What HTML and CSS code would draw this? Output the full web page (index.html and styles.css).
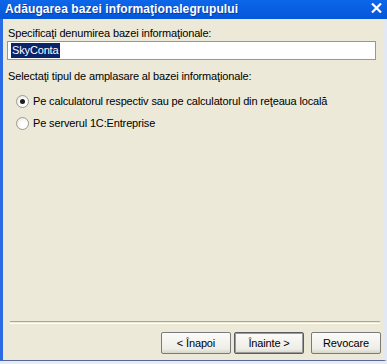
FILE: index.html
```html
<!DOCTYPE html>
<html>
<head>
<meta charset="utf-8">
<link rel="stylesheet" href="styles.css">
</head>
<body>
<div class="window">
  <div class="titlebar">
    <span class="title">Adăugarea bazei informaţionalegrupului</span>
    <svg class="close" width="11" height="10" viewBox="0 0 11 10"><path d="M1 0.5 L10 9.5 M10 0.5 L1 9.5" stroke="#fff" stroke-width="2.2" fill="none"/></svg>
  </div>
  <div class="frame">
    <div class="content">
      <div class="label first">Specificaţi denumirea bazei informaţionale:</div>
      <div class="input"><span class="sel">SkyConta</span></div>
      <div class="label second">Selectaţi tipul de amplasare al bazei informaţionale:</div>
      <div class="radio r1"><span class="circle checked"></span><span>Pe calculatorul respectiv sau pe calculatorul din reţeaua locală</span></div>
      <div class="radio r2"><span class="circle"></span><span>Pe serverul 1C:Entreprise</span></div>
    </div>
    <div class="footer">
      <div class="sep"></div>
      <div class="buttons">
        <div class="btn">&lt; Înapoi</div>
        <div class="btn default">Înainte &gt;</div>
        <div class="btn cancel">Revocare</div>
      </div>
    </div>
  </div>
</div>
</body>
</html>
```

FILE: styles.css
```css
html, body {
  margin: 0;
  padding: 0;
}
body {
  width: 387px;
  height: 364px;
  background: #E6ECF6;
  font-family: "Liberation Sans", Arial, sans-serif;
  font-size: 11px;
  letter-spacing: -0.15px;
  overflow: hidden;
}
.window {
  width: 387px;
  height: 361px;
  display: flex;
  flex-direction: column;
  box-sizing: border-box;
}
.titlebar {
  height: 19px;
  flex: none;
  background: linear-gradient(#0C67EA, #0A5FE2 40%, #0557DA);
  display: flex;
  align-items: center;
  padding: 0 5px 0 5px;
  box-sizing: border-box;
}
.title {
  color: #fff;
  font-weight: bold;
  font-size: 12px;
  letter-spacing: 0.1px;
  text-shadow: 1px 1px 0 #0A3CA0;
  flex: 1;
  line-height: 19px;
}
.close {
  margin-top: -3px;
}
.frame {
  flex: 1;
  display: flex;
  flex-direction: column;
  background: #ECE9D8;
  border-left: 3px solid #2B6CE4;
  border-right: 3px solid #E2E8F4;
  border-bottom: 1px solid #566894;
  padding: 0 3px 0 4px;
}
.content {
  flex: 1;
  display: flex;
  flex-direction: column;
  align-items: flex-start;
  padding-top: 8px;
}
.label {
  line-height: 13px;
  color: #000;
  margin-left: 1px;
}
.label.second {
  margin-top: 10px;
}
.input {
  margin-top: 1px;
  width: 369px;
  height: 19px;
  box-sizing: border-box;
  border: 1px solid #7F9DB9;
  background: #fff;
  display: flex;
  align-items: center;
  padding-left: 3px;
}
.sel {
  background: #0A246A;
  color: #fff;
  line-height: 15px;
  padding: 0 1px;
}
.radio {
  display: flex;
  align-items: center;
  height: 13px;
  line-height: 13px;
  margin-left: 9px;
  gap: 4px;
}
.radio.r1 { margin-top: 12px; }
.radio.r2 { margin-top: 9px; }
.circle {
  width: 13px;
  height: 13px;
  box-sizing: border-box;
  border-radius: 50%;
  border: 1px solid #9C9A92;
  background: radial-gradient(circle at 65% 65%, #fff 30%, #E4E2DA 100%);
  display: flex;
  align-items: center;
  justify-content: center;
}
.circle.checked::after {
  content: "";
  width: 5px;
  height: 5px;
  border-radius: 50%;
  background: #1E1E1E;
}
.footer {
  flex: none;
  padding-bottom: 6px;
}
.sep {
  margin: 0 1px 0 3px;
  height: 1px;
  border-top: 1px solid #ACA899;
  border-bottom: 1px solid #fff;
}
.buttons {
  margin-top: 8px;
  display: flex;
  justify-content: flex-end;
  gap: 3px;
}
.btn {
  width: 70px;
  height: 22px;
  box-sizing: border-box;
  border: 1px solid #7A7A7A;
  border-radius: 2px;
  background: linear-gradient(#FBFBF9, #EEEDE6 80%, #D8D5C9);
  display: flex;
  align-items: center;
  justify-content: center;
  color: #000;
}
.btn.default {
  border: 1px solid #5C5C5C;
  box-shadow: inset 0 0 0 1px #9A9A9A;
}
.btn.cancel {
  margin-left: 4px;
}
```
